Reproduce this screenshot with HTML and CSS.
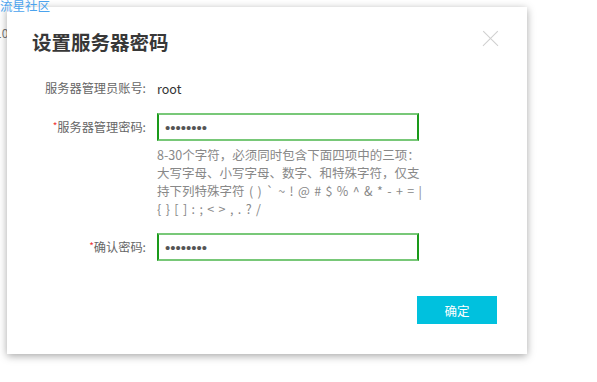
FILE: index.html
```html
<!DOCTYPE html>
<html lang="zh-CN">
<head>
    <meta charset="UTF-8">
    <title>设置服务器密码</title>
    <link rel="stylesheet" href="styles.css">
</head>
<body>
    <div class="page">
        <a class="brand" href="#">流星社区</a>
        <div class="page-line">10.</div>
    </div>

    <div class="dialog">
        <div class="dialog-head">
            <h2>设置服务器密码</h2>
            <span class="close"></span>
        </div>

        <div class="form">
            <div class="row">
                <label>服务器管理员账号:</label>
                <span class="value">root</span>
            </div>
            <div class="row">
                <label><i>*</i>服务器管理密码:</label>
                <input type="password" class="pwd" value="12345678">
            </div>
            <div class="row">
                <span></span>
                <p class="hint">8-30个字符，必须同时包含下面四项中的三项：<br>大写字母、小写字母、数字、和特殊字符，仅支<br><span class="sym">持下列特殊字符 ( ) ` ~ ! @ # $ % ^ &amp; * - + = |<br>{ } [ ] : ; &lt; &gt; , . ? /</span></p>
            </div>
            <div class="row row-confirm">
                <label><i>*</i>确认密码:</label>
                <input type="password" class="pwd" value="12345678">
            </div>
        </div>

        <div class="dialog-foot">
            <button type="button">确定</button>
        </div>
    </div>
</body>
</html>
```

FILE: styles.css
```css
body {
    margin: 0;
    background: #fff;
    font-family: "Noto Sans CJK SC", "Noto Sans", sans-serif;
    font-size: 12px;
    color: #333;
}
.page {
    position: relative;
}
.brand {
    position: relative;
    z-index: 2;
    display: block;
    width: max-content;
    margin-top: -3px;
    font-size: 12.5px;
    line-height: 17px;
    color: #4ba3ee;
    text-decoration: none;
}
.page-line {
    margin-top: 10px;
    margin-left: -5px;
    font-size: 12px;
    line-height: 17px;
    color: #777;
}
.dialog {
    position: absolute;
    z-index: 1;
    left: 7px;
    top: 7px;
    width: 520px;
    height: 347px;
    box-sizing: border-box;
    background: #fff;
    box-shadow: 0 2px 8px rgba(0, 0, 0, 0.35);
    padding: 22px 30px 30px 25px;
}
.dialog-head {
    position: relative;
    height: 26px;
}
.dialog-head h2 {
    margin: 0;
    font-size: 19.5px;
    line-height: 26px;
    font-weight: bold;
    color: #383838;
}
.close {
    position: absolute;
    right: -1px;
    top: 2px;
    width: 15px;
    height: 15px;
}
.close::before,
.close::after {
    content: "";
    position: absolute;
    left: -3px;
    top: 7px;
    width: 21px;
    height: 1.3px;
    background: #cfcfcf;
    transform: rotate(45deg);
}
.close::after {
    transform: rotate(-45deg);
}
.form {
    margin-top: 19px;
    margin-left: -25px;
}
.row {
    display: grid;
    grid-template-columns: 150px 262px;
    align-items: center;
    min-height: 28px;
}
.row + .row {
    margin-top: 11px;
}
.row label {
    text-align: right;
    padding-right: 11px;
    color: #666;
    font-size: 12.2px;
}
.row label i {
    font-style: normal;
    color: #e33;
    font-size: 10px;
    vertical-align: 2px;
}
.value {
    color: #333;
    font-size: 12.5px;
}
.pwd {
    box-sizing: border-box;
    width: 262px;
    height: 28px;
    padding: 0 6px;
    border: 2px solid #78c878;
    border-left-color: #1a9a1a;
    border-right-color: #1a9a1a;
    outline: none;
    font-family: "Liberation Sans", sans-serif;
    font-size: 15px;
    color: #555;
}
.row .hint {
    margin: -6px 0 0;
    font-size: 12.5px;
    line-height: 18px;
    color: #888;
    white-space: nowrap;
}
.sym {
    word-spacing: 1.6px;
}
.row-confirm {
    margin-top: 15px !important;
}
.dialog-foot {
    display: flex;
    justify-content: flex-end;
    margin-top: 35px;
}
button {
    width: 80px;
    height: 28px;
    border: 0;
    background: #00c1de;
    color: #fff;
    font-family: "Noto Sans CJK SC", sans-serif;
    font-size: 12.5px;
    cursor: pointer;
}
```
